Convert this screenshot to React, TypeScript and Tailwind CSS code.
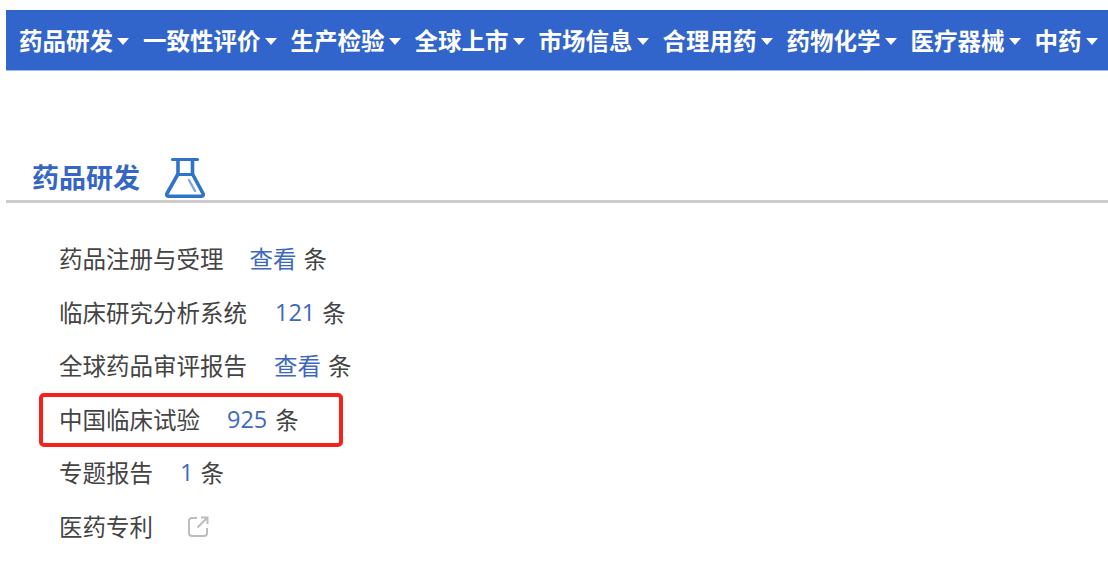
import React from "react";

const FONT = "font-['Noto_Sans_CJK_SC','Noto_Sans',sans-serif]";
const nav = ["药品研发", "一致性评价", "生产检验", "全球上市", "市场信息", "合理用药", "药物化学", "医疗器械", "中药"];

function Flask() {
  return (
    <svg width="42" height="42" viewBox="0 0 42 42" fill="none" stroke="#2f74c8" strokeWidth="3.600" strokeLinejoin="round" strokeLinecap="round">
      <path d="M7.500 2.500h25" strokeWidth="3.200" />
      <path d="M13 3v14L2 36.500c-.7 1.500.2 2.800 1.800 2.800h32.400c1.600 0 2.500-1.300 1.800-2.800L27.500 17V3" />
      <path d="M13 17.500h14.500" strokeWidth="3.200" />
      <path d="M24 23l6 11" strokeWidth="2.400" stroke="#7fa9de" />
    </svg>
  );
}

function Row({ label, value, gap, after = "ml-[7px]" }: { label: string; value: string; gap: string; after?: string }) {
  const digits = /^\d+$/.test(value);
  return (
    <div className="flex h-[53.6px] items-center text-[23.5px] leading-none text-[#444444]">
      <span>{label}</span>
      <span className={`${gap} text-[#3e68bd] ${digits ? "font-['Open_Sans',sans-serif]" : ""}`}>{value}</span>
      <span className={after}>条</span>
    </div>
  );
}

export default function App() {
  return (
    <div className={`${FONT} relative h-[561px] w-[1108px] overflow-hidden bg-white pl-[6px] pt-[10px]`}>
      <nav className="flex h-[61px] items-center overflow-hidden border-b border-[#9dbcec] bg-[#3165cb] pl-[13px] pt-[1px] text-[23.5px] font-bold leading-none text-white">
        {nav.map((n) => (
          <div key={n} className="mr-[14px] flex shrink-0 items-center last:mr-0">
            <span>{n}</span>
            <span className="ml-[4px] mt-[1px] h-0 w-0 border-x-[6.500px] border-t-[7px] border-x-transparent border-t-white" />
          </div>
        ))}
      </nav>
      <div className="mt-[86px] flex h-[46px] items-end border-b-[3px] border-[#cccccc] pb-[1px] pl-[26px]">
        <h2 className="mb-[9px] text-[27px] font-bold leading-none text-[#3566c4]">药品研发</h2>
        <span className="ml-[24.500px] block">
          <Flask />
        </span>
      </div>
      <div className="mt-[29px] pl-[53px]">
        <Row label="药品注册与受理" value="查看" gap="ml-[26px]" />
        <Row label="临床研究分析系统" value="121" gap="ml-[28px]" />
        <Row label="全球药品审评报告" value="查看" gap="ml-[27px]" />
        <Row label="中国临床试验" value="925" gap="ml-[27px]" after="ml-[8px]" />
        <Row label="专题报告" value="1" gap="ml-[27px]" />
        <div className="flex h-[53.6px] items-center text-[23.5px] leading-none text-[#444444]">
          <span>医药专利</span>
          <svg className="ml-[34px]" width="23" height="23" viewBox="0 0 23 23" fill="none" stroke="#bdbdbd" strokeWidth="2">
            <path d="M10 3H5a3 3 0 0 0-3 3v12a3 3 0 0 0 3 3h12a3 3 0 0 0 3-3v-5" />
            <path d="M10.500 12.500 20 3M14 2.500h6.500V9" />
          </svg>
        </div>
      </div>
      <div className="absolute left-[39px] top-[393px] h-[54px] w-[304px] rounded-[5px] border-[4px] border-[#f5221b]" />
    </div>
  );
}
